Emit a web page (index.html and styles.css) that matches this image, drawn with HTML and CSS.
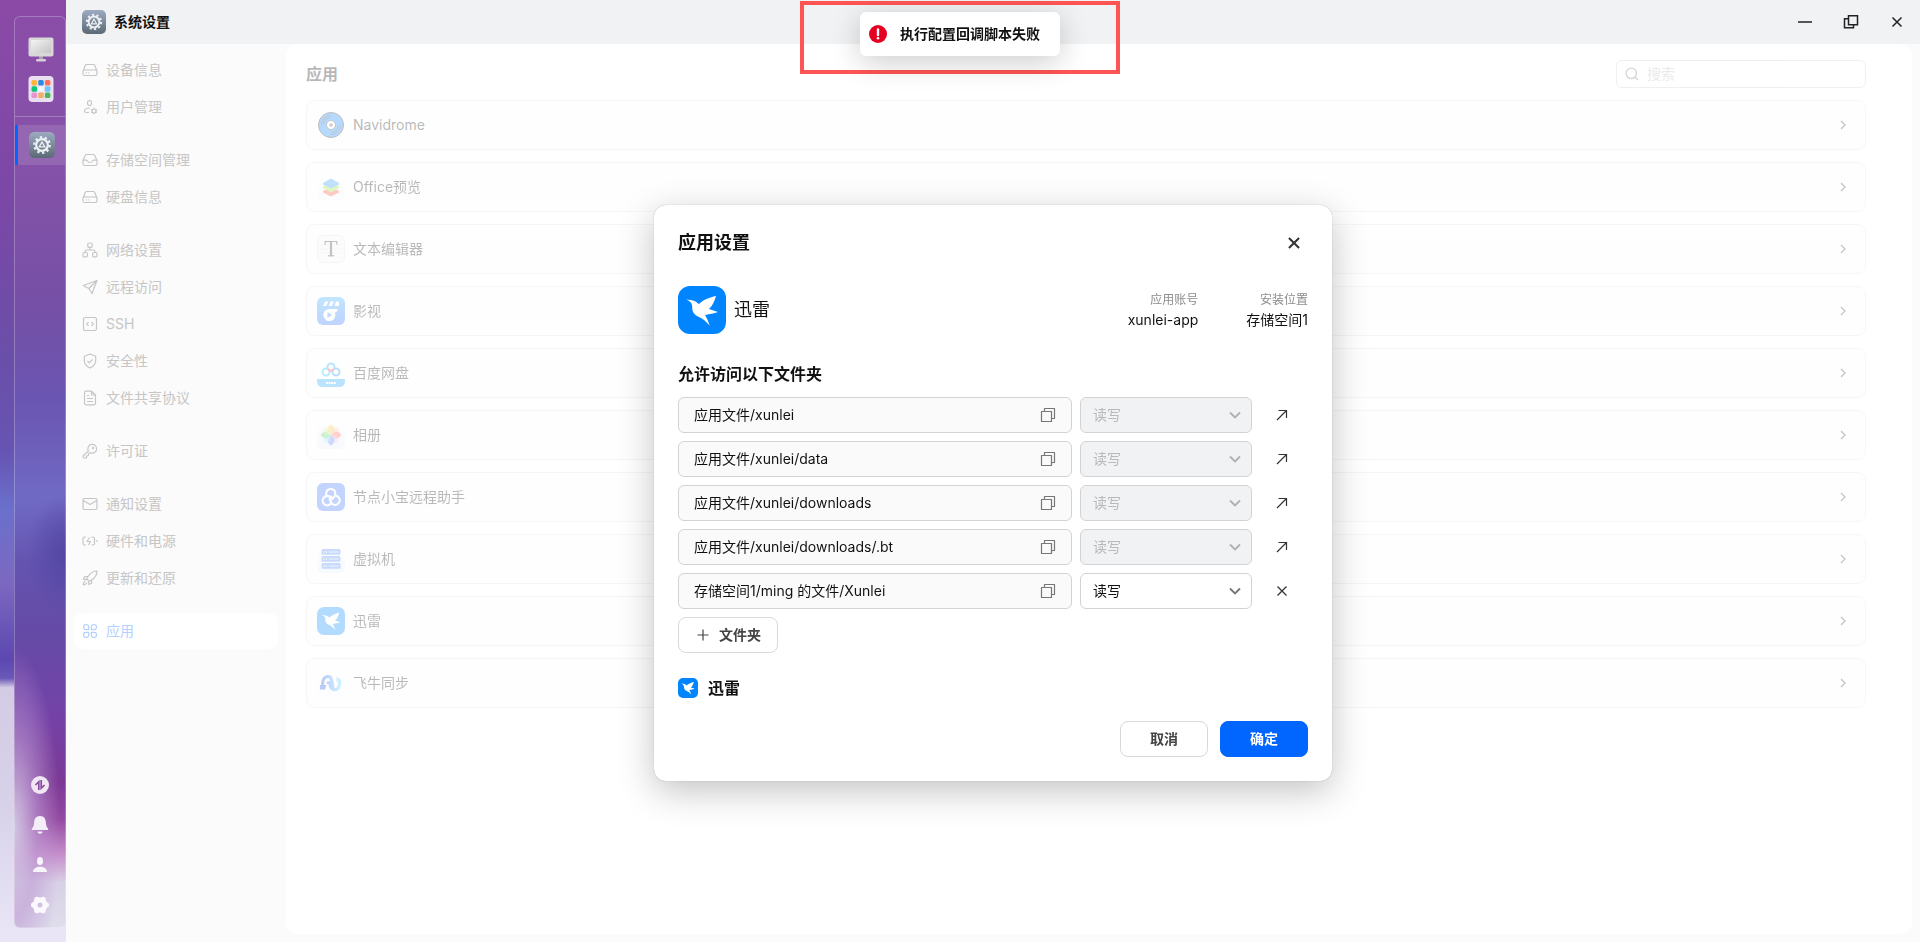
FILE: index.html
```html
<!DOCTYPE html>
<html lang="zh-CN">
<head>
  <meta charset="UTF-8" />
  <meta name="viewport" content="width=device-width, initial-scale=1" />
  <title>系统设置</title>
  <link rel="stylesheet" href="styles.css">
</head>
<body>
  <!-- Shared icons -->
  <svg class="sprite" aria-hidden="true">
    <defs>
      <linearGradient id="g-steel" x1="0" y1="0" x2="0" y2="1"><stop offset="0" stop-color="#9dabc2"/><stop offset="1" stop-color="#5c6975"/></linearGradient>
      <linearGradient id="g-film" x1="0" y1="0" x2="0" y2="1"><stop offset="0" stop-color="#2fa8ff"/><stop offset="1" stop-color="#2a6cff"/></linearGradient>
      <linearGradient id="g-soft" x1="0" y1="0" x2="0" y2="1"><stop offset="0" stop-color="#fdfdfe"/><stop offset="1" stop-color="#e0e9f8"/></linearGradient>
      <linearGradient id="g-sync" x1="0" y1="0" x2="1" y2="0"><stop offset="0" stop-color="#1a52e8"/><stop offset="1" stop-color="#58c8ff"/></linearGradient>
      <linearGradient id="g-screen" x1="0" y1="0" x2="1" y2="1"><stop offset="0" stop-color="#f4f4f4"/><stop offset="1" stop-color="#c4c4c4"/></linearGradient>
    </defs>
    <symbol id="i-gear" viewBox="0 0 24 24">
      <rect width="24" height="24" rx="5" fill="url(#g-steel)"/>
      <circle cx="12" cy="12" r="5.4" fill="none" stroke="#eef1f4" stroke-width="2"/>
      <circle cx="12" cy="12" r="7.2" fill="none" stroke="#eef1f4" stroke-width="2" stroke-dasharray="2.2 2.324"/>
      <path d="M12 9.2l2.6 4.6H9.4z" fill="none" stroke="#eef1f4" stroke-width="1.2"/>
    </symbol>
    <symbol id="i-bird" viewBox="0 0 48 48">
      <rect width="48" height="48" rx="12" fill="#0085ff"/>
      <path d="M8 13.3C11 14 14 14 17 15.2C19 16 19.6 17.5 21 18C25 14 31 11.5 38 9.7C37 14 35 19 31 23L40 26C36 27.5 32 28 27 29C29 32 30.5 36 31.7 39.7C28 35.5 25 32.5 20 30.6C15.5 28.5 14 25 14.2 20.5C14.2 17 12 15.5 8 13.3z" fill="#fff"/>
    </symbol>
    <symbol id="i-copy" viewBox="0 0 16 16"><path d="M1.5 4.5h10v10h-10zM4.5 4.5v-3h10v10h-3" fill="none" stroke="currentColor" stroke-width="1.2" stroke-linejoin="round"/></symbol>
    <symbol id="i-down" viewBox="0 0 16 16"><path d="M3 5.5l5 5 5-5" fill="none" stroke="currentColor" stroke-width="1.9"/></symbol>
    <symbol id="i-right" viewBox="0 0 16 16"><path d="M6 4l4 4-4 4" fill="none" stroke="currentColor" stroke-width="1.4"/></symbol>
    <symbol id="i-open" viewBox="0 0 16 16"><path d="M3 13l9.500-9.500M4.500 3.500h8V11" fill="none" stroke="currentColor" stroke-width="1.2"/></symbol>
    <symbol id="i-close" viewBox="0 0 16 16"><path d="M3.500 3.500l9 9M12.500 3.500l-9 9" fill="none" stroke="currentColor"/></symbol>
    <symbol id="i-disk" viewBox="0 0 16 16"><path d="M1 9.200L3.200 3.500Q3.600 2.500 4.600 2.500h6.800q1 0 1.400 1L15 9.200M2.500 8h11q1.500 0 1.500 1.500v2.500q0 1.500-1.500 1.500h-11Q1 13.500 1 12V9.500Q1 8 2.500 8zM3.800 10.800h1M6.300 10.800h1"/></symbol>
  </svg>

  <div class="desktop">
    <aside class="dock">
      <div class="dock-panel">
        <div class="dock-apps">
          <button class="dock-btn" aria-label="桌面">
            <svg width="26" height="26" viewBox="0 0 26 26"><path d="M11 19h4v3h-4z" fill="#a8a2ac"/><rect x="8" y="22" width="10" height="2.5" rx="1.2" fill="#d6cfd8"/><rect x=".5" y=".5" width="25" height="19" rx="2" fill="#d8d8d8"/><rect x="3" y="3" width="20" height="13" rx="1" fill="url(#g-screen)"/></svg>
          </button>
          <button class="dock-btn" aria-label="应用列表">
            <svg width="26" height="26" viewBox="0 0 26 26"><rect x=".5" width="25" height="26" rx="4" fill="#e9dff1"/>
              <rect x="3.5" y="4" width="5.500" height="5.500" rx="1.5" fill="#ffb43c"/><rect x="10.200" y="4" width="5.500" height="5.500" rx="1.5" fill="#2b8ae6"/><rect x="16.900" y="4" width="5.500" height="5.500" rx="1.5" fill="#ff7058"/>
              <rect x="3.5" y="10.300" width="5.500" height="5.500" rx="1.5" fill="#0cc777"/><rect x="10.200" y="10.300" width="5.500" height="5.500" rx="1.5" fill="#f2f8ff"/><rect x="16.900" y="10.300" width="5.500" height="5.500" rx="1.5" fill="#6cc6ff"/>
              <rect x="3.5" y="16.600" width="5.500" height="5.500" rx="1.5" fill="#e894cf"/><rect x="10.200" y="16.600" width="5.500" height="5.500" rx="1.5" fill="#ecb066"/><rect x="16.900" y="16.600" width="5.500" height="5.500" rx="1.5" fill="#4ab856"/>
            </svg>
          </button>
        </div>
        <button class="dock-btn dock-active" aria-label="系统设置"><svg width="26" height="26"><use href="#i-gear"/></svg></button>
        <div class="dock-tools">
          <button class="dock-btn" aria-label="传输"><svg width="18" height="18" viewBox="0 0 18 18"><circle cx="9" cy="9" r="9" fill="#f0e6f4"/><path d="M4.500 9L7.800 5.700V14M10.200 4v8.300L13.500 9" fill="none" stroke="#8a4a9c" stroke-width="1.7"/></svg></button>
          <button class="dock-btn" aria-label="通知"><svg width="18" height="18" viewBox="0 0 18 18" fill="#f4eef8"><path d="M9 0c4 0 5.600 2.800 5.800 6 .2 3.800.9 5.200 2.300 6.700.5.700.2 1.300-.6 1.300h-15c-.8 0-1.100-.6-.6-1.300C2.300 11.200 3 9.800 3.200 6 3.400 2.800 5 0 9 0zM6.500 15.600h5c0 3-5 3-5 0z"/></svg></button>
          <button class="dock-btn" aria-label="用户"><svg width="18" height="18" viewBox="0 0 18 18" fill="#f8f4fb"><ellipse cx="9" cy="5" rx="3" ry="4"/><path d="M2 16c0-7 14-7 14 0z"/></svg></button>
          <button class="dock-btn" aria-label="设置"><svg width="18" height="18" viewBox="0 0 18 18"><circle cx="9" cy="9" r="5" fill="none" stroke="#fbf9fd" stroke-width="5"/><g fill="#fbf9fd"><circle cx="2.800" cy="9" r="2.800"/><circle cx="15.200" cy="9" r="2.800"/><circle cx="6" cy="3.500" r="2.800"/><circle cx="12" cy="3.500" r="2.800"/><circle cx="6" cy="14.500" r="2.800"/><circle cx="12" cy="14.500" r="2.800"/></g></svg></button>
        </div>
      </div>
    </aside>

    <div class="window">
      <header class="titlebar">
        <svg width="24" height="24"><use href="#i-gear"/></svg>
        <h1>系统设置</h1>
        <div class="window-controls">
          <button aria-label="最小化"><svg width="16" height="16" viewBox="0 0 16 16"><path d="M1 8h14"/></svg></button>
          <button aria-label="还原"><svg width="16" height="16" viewBox="0 0 16 16"><path d="M5.500 1.700h9v9h-9zM5.500 4.700h-4v9h9v-3"/></svg></button>
          <button aria-label="关闭"><svg width="16" height="16" viewBox="0 0 16 16"><path d="M3.500 3.500l9 9M12.500 3.500l-9 9"/></svg></button>
        </div>
      </header>

      <div class="window-body">
        <nav class="sidebar">
          <div class="nav-group">
            <a class="nav-item" href="#"><svg><use href="#i-disk"/></svg><span>设备信息</span></a>
            <a class="nav-item" href="#"><svg viewBox="0 0 16 16"><ellipse cx="7.500" cy="4" rx="2" ry="2.500"/><path d="M8 9C4.500 9 2.500 10.500 2.500 12q0 1.500 2 1.500H7"/><circle cx="12" cy="12" r="2"/><path d="M12 8.800V10M12 14v1.200M9.200 10.400l1 .6M13.800 13l1 .6M14.800 10.400l-1 .6M10.200 13l-1 .6"/></svg><span>用户管理</span></a>
          </div>
          <div class="nav-group">
            <a class="nav-item" href="#"><svg viewBox="0 0 16 16"><path d="M1 8.500L3.200 3.500Q3.600 2.500 4.600 2.500h6.800q1 0 1.400 1L15 8.500V12q0 1.500-1.500 1.500h-11Q1 13.500 1 12zM1 8.200h3.500c1 0 1 2.300 3.500 2.300s2.500-2.300 3.500-2.300H15"/></svg><span>存储空间管理</span></a>
            <a class="nav-item" href="#"><svg><use href="#i-disk"/></svg><span>硬盘信息</span></a>
          </div>
          <div class="nav-group">
            <a class="nav-item" href="#"><svg viewBox="0 0 16 16"><rect x="5.800" y="1" width="4.400" height="4.400" rx="1.200"/><rect x="1" y="10.500" width="4.400" height="4.400" rx="1.200"/><rect x="10.600" y="10.500" width="4.400" height="4.400" rx="1.200"/><path d="M8 5.400V8M3.200 10.500V9q0-1 1-1h7.600q1 0 1 1v1.500"/></svg><span>网络设置</span></a>
            <a class="nav-item" href="#"><svg viewBox="0 0 16 16"><path d="M15 1.500L1.200 6.500l5.600 3L10 14.500zM6.800 9.500L15 1.500"/></svg><span>远程访问</span></a>
            <a class="nav-item" href="#"><svg viewBox="0 0 16 16"><rect x="1.500" y="1.500" width="13" height="13" rx="1.800"/><path d="M6.500 6.200L4.800 8l1.700 1.800M9.500 6.200L11.200 8 9.500 9.800"/></svg><span>SSH</span></a>
            <a class="nav-item" href="#"><svg viewBox="0 0 16 16"><path d="M8 1l5.700 2.200v4.300c0 3.500-2.200 5.800-5.700 7.500-3.500-1.700-5.700-4-5.700-7.500V3.200zM5.500 8l1.800 1.800L10.500 6.500"/></svg><span>安全性</span></a>
            <a class="nav-item" href="#"><svg viewBox="0 0 16 16"><path d="M9.500 1.200H4Q2.500 1.200 2.500 2.700v10.600q0 1.500 1.500 1.500h8q1.500 0 1.500-1.500V5zM9.500 1.200V5h4M5 5.500h2M5 8.500h6M5 11.500h6"/></svg><span>文件共享协议</span></a>
          </div>
          <div class="nav-group">
            <a class="nav-item" href="#"><svg viewBox="0 0 16 16"><path d="M6.400 8L1.200 12.700Q.8 15 2 15H4.500v-2l1.800-.3.300-1.900L8 9.600A4.400 4.400 0 1 0 6.400 8z"/><circle cx="11" cy="5" r=".6"/></svg><span>许可证</span></a>
          </div>
          <div class="nav-group">
            <a class="nav-item" href="#"><svg viewBox="0 0 16 16"><rect x="1" y="2.500" width="14" height="11" rx="1.500"/><path d="M1.200 4.500L8 8.500l6.800-4"/></svg><span>通知设置</span></a>
            <a class="nav-item" href="#"><svg viewBox="0 0 16 16"><path d="M4 4H2.500Q1 4 1 5.500v5Q1 12 2.500 12H4M9.500 4H11q1.500 0 1.500 1.500v5q0 1.500-1.500 1.500H9.500M7.500 4.500L5 8.500h3.500L6.500 12M15 7v2"/></svg><span>硬件和电源</span></a>
            <a class="nav-item" href="#"><svg viewBox="0 0 16 16"><path d="M15 1c-4 0-6.500 1.500-9 5.500L4.800 9l2.300 2.300L9.600 10C13.500 7.500 15 5 15 1zM6 6.500H2.800L1.500 9.300h3.300M9.600 10v3.200l-2.800 1.300v-3.200M3.500 11c-1.500.5-2 2-2.200 3.800 1.700-.2 3.200-.7 3.700-2.200"/></svg><span>更新和还原</span></a>
          </div>
          <div class="nav-group">
            <a class="nav-item active" href="#"><svg viewBox="0 0 16 16"><path d="M6.700 6.700H4A2.600 2.600 0 1 1 6.700 4zM9.300 6.700V4A2.600 2.600 0 1 1 12 6.700zM6.700 9.300V12A2.600 2.600 0 1 1 4 9.300zM9.300 9.300H12A2.600 2.600 0 1 1 9.300 12z"/></svg><span>应用</span></a>
          </div>
        </nav>

        <main class="content">
          <div class="content-head">
            <h2>应用</h2>
            <label class="search">
              <svg width="14" height="14" viewBox="0 0 14 14"><path d="M10 10l3 3M11.500 6.300a5.200 5.200 0 1 1-10.400 0 5.200 5.200 0 0 1 10.400 0z" fill="none" stroke="#777" stroke-width="1.3"/></svg>
              <input type="text" placeholder="搜索" aria-label="搜索" />
            </label>
          </div>
          <div class="app-list">
            <a class="app-row" href="#">
              <svg class="app-icon" viewBox="0 0 28 28"><circle cx="14" cy="14" r="12.500" fill="#0a84ff" stroke="#222" stroke-width="1"/><path d="M4.500 14a9.500 9.500 0 0 1 9.500-9.500M6.700 13A7.300 7.300 0 0 1 13 6.700M23.500 14a9.500 9.500 0 0 1-9.500 9.500M21.300 15a7.300 7.300 0 0 1-6.300 6.300" fill="none" stroke="#333" stroke-width=".9"/><circle cx="14" cy="14" r="4.500" fill="#fff" stroke="#222" stroke-width=".8"/><circle cx="14" cy="14" r="1.800" fill="#555"/></svg>
              <span>Navidrome</span><svg class="arrow"><use href="#i-right"/></svg>
            </a>
            <a class="app-row" href="#">
              <svg class="app-icon" viewBox="0 0 28 28"><rect width="28" height="28" rx="6" fill="url(#g-soft)" opacity=".4"/><path d="M6 18l8-4 8 4v1.500L14 23.500l-8-4z" fill="#ff4a36"/><path d="M6 13.500l8-4 8 4V15l-8 4.500L6 15z" fill="#9be030"/><path d="M14 5.500l8 4.500v1.500L14 15.500l-8-4V10z" fill="#2a9cf5"/></svg>
              <span>Office预览</span><svg class="arrow"><use href="#i-right"/></svg>
            </a>
            <a class="app-row" href="#">
              <svg class="app-icon" viewBox="0 0 28 28"><rect x=".5" y=".5" width="27" height="27" rx="5.500" fill="#f3f3f3" stroke="#ddd"/><path d="M2 10h24M2 14h24M2 18h24" stroke="#e4e4e4"/><path d="M8.200 9.800V6.500h11.600v3.300" fill="none" stroke="#333" stroke-width="1.2"/><path d="M14 6.500v14.300" stroke="#333" stroke-width="2.200"/><path d="M10.800 20.800h6.400" stroke="#333" stroke-width="1.2"/></svg>
              <span>文本编辑器</span><svg class="arrow"><use href="#i-right"/></svg>
            </a>
            <a class="app-row" href="#">
              <svg class="app-icon" viewBox="0 0 28 28"><rect width="28" height="28" rx="6" fill="url(#g-film)"/><path d="M8 4.500h3.500l-2.500 4.500H6zM13.500 4.500H17L15 9h-3.500zM19 4.500h3V9h-4.500z" fill="#fff"/><path d="M12 12h8.500c0 2-1 3.300-2.700 3.500A6 6 0 1 1 12 12z" fill="#fff"/><path d="M10.500 15l4.500 3-4.500 3z" fill="#2a80ff"/></svg>
              <span>影视</span><svg class="arrow"><use href="#i-right"/></svg>
            </a>
            <a class="app-row" href="#">
              <svg class="app-icon" viewBox="0 0 28 28"><rect width="28" height="28" rx="6" fill="#fcfdff"/><path d="M0 20h28v2q0 6-6 6H6q-6 0-6-6z" fill="#19a4f8"/><path d="M9 24h10" stroke="#fff" stroke-width="2" stroke-dasharray="2 .6"/><g fill="none" stroke-width="2"><circle cx="9" cy="13" r="3.500" stroke="#15bff0"/><circle cx="19" cy="13" r="3.500" stroke="#1592f0"/><circle cx="14" cy="8" r="3.500" stroke="#19a4f8"/><path d="M11 10Q14 13.500 17 10" stroke="#ff3a4c"/></g></svg>
              <span>百度网盘</span><svg class="arrow"><use href="#i-right"/></svg>
            </a>
            <a class="app-row" href="#">
              <svg class="app-icon" viewBox="0 0 28 28"><rect width="28" height="28" rx="6" fill="url(#g-soft)"/><g transform="translate(14 14)"><path d="M0 0L-3.500-4Q-4-8 0-10.500Q4-8 3.500-4z" fill="#ffc53d"/><path d="M0 0L-3.500-4Q-4-8 0-10.500Q4-8 3.500-4z" fill="#ffa066" opacity=".5" transform="rotate(45)"/><path d="M0 0L-3.500-4Q-4-8 0-10.500Q4-8 3.500-4z" fill="#ff6254" transform="rotate(90)"/><path d="M0 0L-3.500-4Q-4-8 0-10.500Q4-8 3.500-4z" fill="#ee90e8" opacity=".5" transform="rotate(135)"/><path d="M0 0L-3.500-4Q-4-8 0-10.500Q4-8 3.500-4z" fill="#547cff" transform="rotate(180)"/><path d="M0 0L-3.500-4Q-4-8 0-10.500Q4-8 3.500-4z" fill="#72d8e8" opacity=".5" transform="rotate(225)"/><path d="M0 0L-3.500-4Q-4-8 0-10.500Q4-8 3.500-4z" fill="#4dcf68" transform="rotate(270)"/><path d="M0 0L-3.500-4Q-4-8 0-10.500Q4-8 3.500-4z" fill="#bfe26a" opacity=".5" transform="rotate(315)"/></g></svg>
              <span>相册</span><svg class="arrow"><use href="#i-right"/></svg>
            </a>
            <a class="app-row" href="#">
              <svg class="app-icon" viewBox="0 0 28 28"><rect width="28" height="28" rx="6" fill="#3870ff"/><g fill="none" stroke="#fff" stroke-width="2" stroke-linecap="round"><g id="knot"><path d="M9.300 12.500C8.500 8 11 5.800 14 6c4 .3 5.500 4 3.500 7.500-1 1.800-2.500 2.800-4 3.500"/></g><use href="#knot" transform="rotate(120 14 15.200)"/><use href="#knot" transform="rotate(240 14 15.200)"/></g></svg>
              <span>节点小宝远程助手</span><svg class="arrow"><use href="#i-right"/></svg>
            </a>
            <a class="app-row" href="#">
              <svg class="app-icon" viewBox="0 0 28 28"><rect width="28" height="28" rx="6" fill="url(#g-soft)"/><g fill="#4a84f8"><rect x="4.500" y="4" width="19" height="5.800" rx="1.500"/><rect x="4.500" y="11" width="19" height="5.800" rx="1.500"/><rect x="4.500" y="18" width="19" height="5.800" rx="1.500"/></g><path d="M6.500 7h1M9 7h1M6.500 14h1M9 14h1M6.500 21h1M9 21h1" stroke="#e8ffb0" stroke-width="1.5"/><path d="M12 7h9.500M12 14h9.500M12 21h9.500" stroke="#80b0ff" stroke-width="2"/></svg>
              <span>虚拟机</span><svg class="arrow"><use href="#i-right"/></svg>
            </a>
            <a class="app-row" href="#">
              <svg class="app-icon"><use href="#i-bird"/></svg>
              <span>迅雷</span><svg class="arrow"><use href="#i-right"/></svg>
            </a>
            <a class="app-row" href="#">
              <svg class="app-icon" viewBox="0 0 28 28"><rect width="28" height="28" rx="6" fill="url(#g-soft)" opacity=".3"/><path d="M6 18C4.500 11.500 7.500 7.500 11 7.500c6.500 0 2.500 13 7 13 3.500 0 5-3.500 4.500-8M11 15c-.5-2 1.800-2 2 0 .2 3 1.500 5.500 4 5.500" fill="none" stroke="url(#g-sync)" stroke-width="3"/><path d="M3 16h6.500L8 20.500H3z" fill="#1a52e8"/><path d="M19.500 12.500V8l5 3-1 2.500z" fill="#58c8ff"/></svg>
              <span>飞牛同步</span><svg class="arrow"><use href="#i-right"/></svg>
            </a>
          </div>
        </main>

        <div class="modal-wrap">
          <section class="modal" role="dialog" aria-labelledby="modal-title">
            <div class="modal-head">
              <h2 id="modal-title">应用设置</h2>
              <button class="icon-btn close-btn" aria-label="关闭"><svg><use href="#i-close"/></svg></button>
            </div>

            <div class="app-info">
              <svg width="48" height="48"><use href="#i-bird"/></svg>
              <span class="app-name">迅雷</span>
              <dl>
                <div><dt>应用账号</dt><dd>xunlei-app</dd></div>
                <div><dt>安装位置</dt><dd>存储空间1</dd></div>
              </dl>
            </div>

            <h3>允许访问以下文件夹</h3>
            <div class="folders">
              <div class="folder-row">
                <div class="path"><input type="text" value="应用文件/xunlei" aria-label="文件夹路径" readonly /><button class="icon-btn" aria-label="复制"><svg><use href="#i-copy"/></svg></button></div>
                <div class="select"><select aria-label="权限" disabled><option>读写</option></select><svg><use href="#i-down"/></svg></div>
                <button class="icon-btn" aria-label="打开"><svg><use href="#i-open"/></svg></button>
              </div>
              <div class="folder-row">
                <div class="path"><input type="text" value="应用文件/xunlei/data" aria-label="文件夹路径" readonly /><button class="icon-btn" aria-label="复制"><svg><use href="#i-copy"/></svg></button></div>
                <div class="select"><select aria-label="权限" disabled><option>读写</option></select><svg><use href="#i-down"/></svg></div>
                <button class="icon-btn" aria-label="打开"><svg><use href="#i-open"/></svg></button>
              </div>
              <div class="folder-row">
                <div class="path"><input type="text" value="应用文件/xunlei/downloads" aria-label="文件夹路径" readonly /><button class="icon-btn" aria-label="复制"><svg><use href="#i-copy"/></svg></button></div>
                <div class="select"><select aria-label="权限" disabled><option>读写</option></select><svg><use href="#i-down"/></svg></div>
                <button class="icon-btn" aria-label="打开"><svg><use href="#i-open"/></svg></button>
              </div>
              <div class="folder-row">
                <div class="path"><input type="text" value="应用文件/xunlei/downloads/.bt" aria-label="文件夹路径" readonly /><button class="icon-btn" aria-label="复制"><svg><use href="#i-copy"/></svg></button></div>
                <div class="select"><select aria-label="权限" disabled><option>读写</option></select><svg><use href="#i-down"/></svg></div>
                <button class="icon-btn" aria-label="打开"><svg><use href="#i-open"/></svg></button>
              </div>
              <div class="folder-row">
                <div class="path"><input type="text" value="存储空间1/ming 的文件/Xunlei" aria-label="文件夹路径" readonly /><button class="icon-btn" aria-label="复制"><svg><use href="#i-copy"/></svg></button></div>
                <div class="select"><select aria-label="权限"><option>读写</option><option>只读</option></select><svg><use href="#i-down"/></svg></div>
                <button class="icon-btn" aria-label="移除"><svg><use href="#i-close"/></svg></button>
              </div>
              <button class="btn btn-add"><svg width="16" height="16" viewBox="0 0 16 16"><path d="M8 2.500v11M2.500 8h11" stroke="currentColor" stroke-width="1.2"/></svg>文件夹</button>
            </div>

            <div class="sub-app">
              <svg width="20" height="20"><use href="#i-bird"/></svg>
              <h3>迅雷</h3>
            </div>

            <div class="modal-foot">
              <button class="btn">取消</button>
              <button class="btn btn-primary">确定</button>
            </div>
          </section>
        </div>
      </div>
    </div>

    <div class="toast-frame">
      <div class="toast" role="alert">
        <svg width="18" height="18" viewBox="0 0 18 18"><circle cx="9" cy="9" r="9" fill="#e60022"/><path d="M9 4.500v5.500" stroke="#fff" stroke-width="2.4" stroke-linecap="round"/><circle cx="9" cy="13.300" r="1.300" fill="#fff"/></svg>
        <span>执行配置回调脚本失败</span>
      </div>
    </div>
  </div>
</body>
</html>
```
FILE: styles.css
```css
* {
  margin: 0;
  padding: 0;
  box-sizing: border-box;
}

body {
  font-family: Inter, "Noto Sans CJK SC", sans-serif;
  font-size: 14px;
  line-height: 20px;
  color: #111;
}

button, input, select {
  font: inherit;
  color: inherit;
}

button {
  background: none;
  border: none;
  cursor: pointer;
}

a {
  color: inherit;
  text-decoration: none;
}

svg {
  display: block;
  flex-shrink: 0;
}

.sprite {
  position: absolute;
  width: 0;
  height: 0;
}

.desktop {
  position: relative;
  display: flex;
  min-height: 100vh;
}

/* Dock */
.dock {
  display: flex;
  width: 66px;
  padding: 16px 0 14px 14px;
  background:
    linear-gradient(#8b4aa6 0%, #7a48a6 22%, #6a4fa8 38%, #6754b2 48%, #6a70cc 54%, #7c68c0 62%, #5c48b0 70%, #6a58b8 72%, #d4cce4 73%, #d6d0e8 84%, #eae6f7 100%);
}

.dock-panel {
  flex: 1;
  display: flex;
  flex-direction: column;
  border: 1px solid rgba(255, 255, 255, 0.25);
  border-radius: 6px;
  background:
    radial-gradient(ellipse 46px 180px at 0 89%, rgba(212, 202, 228, 0.95), rgba(190, 155, 212, 0.6) 50%, transparent),
    radial-gradient(ellipse 40px 60px at 100% 59%, #5346a4, transparent),
    linear-gradient(#8a4da8 0%, #8652a8 15%, #7550a6 32%, #6a55b2 42%, #706ac4 53%, #6454b0 60%, #654aa6 68%, #7343a8 76%, #7c3a96 84%, #934aa2 88%, #c68fcc 92%, #d8d0e6 95%, #dfddec 100%);
  background-origin: border-box;
}

.dock-btn {
  display: flex;
  align-items: center;
  justify-content: center;
  width: 100%;
  height: 40px;
}

.dock-apps {
  padding: 13px 0 7px 2px;
  margin-bottom: 8px;
  border-bottom: 1px solid rgba(255, 255, 255, 0.25);
}

.dock-apps .dock-btn + .dock-btn {
  margin-top: -1px;
}

.dock-active {
  border-left: 3px solid #0066ff;
  background: rgba(255, 255, 255, 0.12);
}

.dock-tools {
  margin-top: auto;
  padding-bottom: 2px;
}

/* Window */
.window {
  flex: 1;
  display: flex;
  flex-direction: column;
  min-width: 0;
  background: #fbfbfb;
}

.titlebar {
  display: flex;
  align-items: center;
  gap: 8px;
  height: 44px;
  padding-left: 16px;
  background: #f1f2f4;
}

.titlebar h1 {
  font-size: 14px;
  font-weight: 700;
}

.window-controls {
  display: flex;
  margin-left: auto;
}

.window-controls button {
  display: flex;
  align-items: center;
  justify-content: center;
  width: 46px;
  height: 44px;
}

.window-controls path {
  fill: none;
  stroke: #222;
  stroke-width: 1.5;
}

.window-body {
  position: relative;
  flex: 1;
  display: flex;
  gap: 8px;
  padding: 0 8px 8px;
}

/* Sidebar */
.sidebar {
  display: flex;
  flex-direction: column;
  gap: 17px;
  width: 204px;
  padding-top: 8px;
}

.nav-group {
  display: flex;
  flex-direction: column;
  gap: 1px;
}

.nav-item {
  display: flex;
  align-items: center;
  gap: 8px;
  height: 36px;
  padding: 0 8px;
  border-radius: 8px;
  color: #c6c6c6;
}

.nav-item svg {
  width: 16px;
  height: 16px;
  fill: none;
  stroke: currentColor;
  stroke-width: 1.2;
  stroke-linejoin: round;
}

.nav-item.active {
  background: #fff;
  color: #b3d1ff;
}

/* Content */
.content {
  flex: 1;
  padding: 16px 46px 20px 20px;
  border-radius: 12px;
  background: #fff;
}

.content-head {
  display: flex;
  align-items: center;
  justify-content: space-between;
  margin-bottom: 12px;
  opacity: 0.3;
}

.content-head h2 {
  font-size: 16px;
  font-weight: 700;
}

.search {
  display: flex;
  align-items: center;
  gap: 8px;
  width: 250px;
  height: 28px;
  padding: 0 8px;
  border: 1px solid #ccc;
  border-radius: 6px;
}

.search input {
  flex: 1;
  min-width: 0;
  border: none;
  outline: none;
  background: none;
}

.search input::placeholder {
  color: #bbb;
}

.app-list {
  display: flex;
  flex-direction: column;
  gap: 12px;
  opacity: 0.3;
}

.app-row {
  display: flex;
  align-items: center;
  gap: 8px;
  height: 50px;
  padding: 0 14px 0 10px;
  border: 1px solid #e2e2e2;
  border-radius: 8px;
  background: #fbfbfb;
}

.app-icon {
  width: 28px;
  height: 28px;
}

.arrow {
  width: 16px;
  height: 16px;
  margin-left: auto;
  color: #444;
}

/* Modal */
.modal-wrap {
  position: absolute;
  inset: 0;
  display: flex;
  align-items: center;
  justify-content: center;
}

.modal {
  width: 678px;
  padding: 24px;
  border-radius: 12px;
  background: #fff;
  box-shadow: 0 0 1px rgba(0, 0, 0, 0.4), 0 10px 36px rgba(0, 0, 0, 0.24);
}

.modal-head {
  display: flex;
  align-items: center;
  justify-content: space-between;
  height: 28px;
  margin-bottom: 29px;
}

.modal-head h2 {
  font-size: 18px;
  font-weight: 700;
}

.icon-btn {
  display: flex;
  align-items: center;
  justify-content: center;
  width: 28px;
  height: 28px;
  color: #333;
}

.icon-btn svg {
  width: 16px;
  height: 16px;
  stroke-width: 1.3;
}

.close-btn svg {
  width: 18px;
  height: 18px;
  stroke-width: 1.8;
}

.app-info {
  display: flex;
  align-items: center;
  gap: 8px;
  margin-bottom: 28px;
}

.app-name {
  font-size: 18px;
}

.app-info dl {
  display: flex;
  gap: 48px;
  margin-left: auto;
  text-align: right;
}

.app-info dt {
  font-size: 12px;
  color: #8c8c8c;
}

.modal h3 {
  font-size: 16px;
  line-height: 24px;
  font-weight: 700;
}

.folders {
  display: flex;
  flex-direction: column;
  align-items: stretch;
  gap: 8px;
  margin: 11px 0 23px;
}

.folder-row {
  display: grid;
  grid-template-columns: 1fr 172px 44px;
  align-items: center;
  gap: 8px;
  padding-right: 4px;
}

.folder-row > .icon-btn {
  justify-self: center;
}

.path {
  display: flex;
  align-items: center;
  height: 36px;
  padding: 0 9px 0 15px;
  border: 1px solid #d2d3d5;
  border-radius: 6px;
  background: #fafafa;
}

.path input {
  flex: 1;
  min-width: 0;
  border: none;
  outline: none;
  background: none;
}

.path .icon-btn {
  color: #777;
}

.select {
  display: grid;
  align-items: center;
}

.select select,
.select svg {
  grid-area: 1 / 1;
}

.select select {
  width: 100%;
  height: 36px;
  padding: 0 12px;
  border: 1px solid #d2d3d5;
  border-radius: 6px;
  background: #fff;
  appearance: none;
}

.select select:disabled {
  background: #f1f2f4;
  color: #b8b9bb;
  opacity: 1;
}

.select svg {
  justify-self: end;
  width: 16px;
  height: 16px;
  margin-right: 9px;
  color: #777;
  pointer-events: none;
}

.select select:disabled + svg {
  color: #b0b1b3;
}

.btn {
  display: flex;
  align-items: center;
  justify-content: center;
  gap: 8px;
  width: 88px;
  height: 36px;
  border: 1px solid #d9d9d9;
  border-radius: 8px;
  background: #fff;
  color: #444;
  font-weight: 700;
}

.btn-add {
  width: 100px;
}

.btn-primary {
  border-color: #0066ff;
  background: #0066ff;
  color: #fff;
}

.sub-app {
  display: flex;
  align-items: center;
  gap: 10px;
  margin-bottom: 21px;
}

.modal-foot {
  display: flex;
  justify-content: flex-end;
  gap: 12px;
}

/* Toast */
.toast-frame {
  position: absolute;
  top: 1px;
  left: 50%;
  width: 320px;
  padding: 7px 0 14px;
  border: 4px solid #ff5454;
  transform: translateX(-50%);
}

.toast {
  display: flex;
  align-items: center;
  gap: 13px;
  width: 200px;
  height: 44px;
  margin: 0 auto;
  padding: 0 9px;
  border-radius: 6px;
  background: #fff;
  box-shadow: 0 6px 30px rgba(0, 0, 0, 0.2);
  font-weight: 700;
}
```
